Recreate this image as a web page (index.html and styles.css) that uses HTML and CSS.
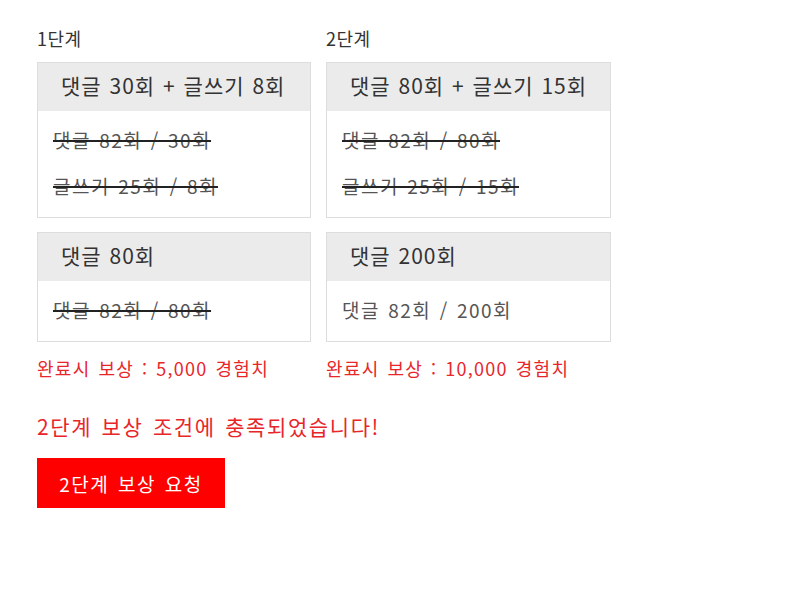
FILE: index.html
```html
<!DOCTYPE html>
<html lang="ko">
<head>
<meta charset="UTF-8">
<title>단계 보상</title>
<link rel="stylesheet" href="styles.css">
</head>
<body>
<div class="container">
  <div class="steps">
    <div class="step step-1">
      <h2>1단계</h2>
      <div class="mission">
        <div class="mission-head">댓글 30회 + 글쓰기 8회</div>
        <div class="mission-body">
          <p class="done">댓글 82회 / 30회</p>
          <p class="done">글쓰기 25회 / 8회</p>
        </div>
      </div>
      <div class="mission">
        <div class="mission-head">댓글 80회</div>
        <div class="mission-body">
          <p class="done">댓글 82회 / 80회</p>
        </div>
      </div>
      <div class="reward">완료시 보상 : 5,000 경험치</div>
    </div>
    <div class="step step-2">
      <h2>2단계</h2>
      <div class="mission">
        <div class="mission-head">댓글 80회 + 글쓰기 15회</div>
        <div class="mission-body">
          <p class="done">댓글 82회 / 80회</p>
          <p class="done">글쓰기 25회 / 15회</p>
        </div>
      </div>
      <div class="mission">
        <div class="mission-head">댓글 200회</div>
        <div class="mission-body">
          <p>댓글 82회 / 200회</p>
        </div>
      </div>
      <div class="reward">완료시 보상 : 10,000 경험치</div>
    </div>
  </div>
  <p class="notice">2단계 보상 조건에 충족되었습니다!</p>
  <button type="button" class="claim">2단계 보상 요청</button>
</div>
</body>
</html>
```
FILE: styles.css
```css
body {
  margin: 0;
  font-family: "Noto Sans CJK KR", "Noto Sans", sans-serif;
  color: #333;
  background: #fff;
}

.container {
  padding: 26px 37px;
}

.steps {
  display: grid;
  grid-template-columns: 274px 285px;
  column-gap: 15px;
}

h2 {
  margin: 0 0 12px;
  font-size: 18px;
  font-weight: normal;
  line-height: 24px;
  letter-spacing: 0.5px;
}

.mission {
  border: 1px solid #ddd;
  margin-bottom: 14px;
}

.mission-head {
  background: #ebebeb;
  padding: 0 23px 3px;
  font-size: 21px;
  line-height: 45px;
  letter-spacing: 1px;
  word-spacing: 1px;
  white-space: nowrap;
}

.mission-body {
  padding: 6px 15px 8px;
}

.mission-body p {
  margin: 0;
  font-size: 19px;
  line-height: 46px;
  letter-spacing: 1.5px;
  word-spacing: 1.5px;
  color: #555;
}

.mission-body p.done {
  text-decoration: line-through;
  text-decoration-color: #222;
  text-decoration-thickness: 2px;
}

.reward {
  margin-top: 8px;
  font-size: 18px;
  line-height: 24px;
  letter-spacing: 1.3px;
  word-spacing: 1.5px;
  color: #e8262a;
}

.notice {
  margin: 32px 0 0;
  font-size: 21px;
  line-height: 28px;
  letter-spacing: 1.6px;
  word-spacing: 2px;
  color: #e8262a;
}

.claim {
  margin-top: 18px;
  width: 188px;
  height: 50px;
  border: none;
  background: #ff0000;
  color: #fff;
  font-family: inherit;
  font-size: 19px;
  letter-spacing: 1.5px;
  word-spacing: 2px;
  cursor: pointer;
}
```
